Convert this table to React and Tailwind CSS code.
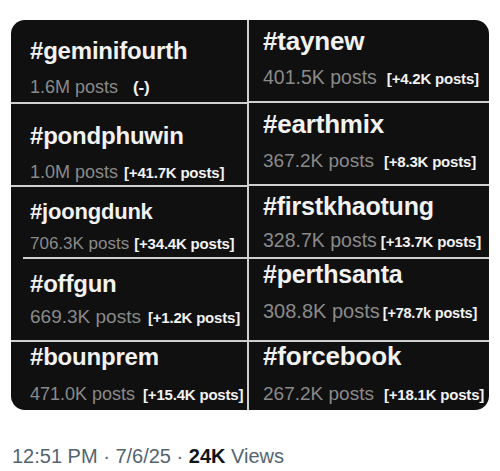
import React from 'react';

// left and right columns of the trend collage (rows don't line up exactly)
const LEFT = [
  { tag: '#geminifourth', h: 'h-[84px] pt-[19px]', tagSize: 'text-[24px]', postsSize: 'text-[18px]', gap: 'mt-[15px]', posts: '1.6M posts', delta: '(-)', deltaGap: 'ml-[15px] text-[17px]', line: 'border-b-2' },
  { tag: '#pondphuwin', h: 'h-[83px] pt-[20px]', tagSize: 'text-[24px]', postsSize: 'text-[18px]', gap: 'mt-[15px]', posts: '1.0M posts', delta: '[+41.7K posts]', deltaGap: 'ml-[6px] text-[15px]', line: 'border-b-2' },
  { tag: '#joongdunk', h: 'h-[72px] pt-[14px]', tagSize: 'text-[22px]', postsSize: 'text-[17px]', gap: 'mt-[12px]', posts: '706.3K posts', delta: '[+34.4K posts]', deltaGap: 'ml-[5px] text-[15px]', line: 'inset' },
  { tag: '#offgun', h: 'h-[83px] pt-[13px]', tagSize: 'text-[24px]', postsSize: 'text-[19px]', gap: 'mt-[11px]', posts: '669.3K posts', delta: '[+1.2K posts]', deltaGap: 'ml-[7px] text-[15px]', line: 'border-b-2' },
  { tag: '#bounprem', h: 'h-[68px] pt-[3px]', tagSize: 'text-[24px]', postsSize: 'text-[18px]', gap: 'mt-[16px]', posts: '471.0K posts', delta: '[+15.4K posts]', deltaGap: 'ml-[8px] text-[15px]', line: '' },
];

const RIGHT = [
  { tag: '#taynew', h: 'h-[83px] pt-[8px]', tagSize: 'text-[26px]', postsSize: 'text-[19.5px]', gap: 'mt-[14px]', posts: '401.5K posts', delta: '[+4.2K posts]', deltaGap: 'ml-[10px] text-[15px]', line: 'border-b-2' },
  { tag: '#earthmix', h: 'h-[83px] pt-[8px]', tagSize: 'text-[26px]', postsSize: 'text-[19px]', gap: 'mt-[14px]', posts: '367.2K posts', delta: '[+8.3K posts]', deltaGap: 'ml-[10px] text-[15px]', line: 'border-b-2' },
  { tag: '#firstkhaotung', h: 'h-[73px] pt-[8px]', tagSize: 'text-[25px]', postsSize: 'text-[19.5px]', gap: 'mt-[12px]', posts: '328.7K posts', delta: '[+13.7K posts]', deltaGap: 'ml-[4px] text-[15px]', line: 'border-b-2' },
  { tag: '#perthsanta', h: 'h-[83px] pt-[3px]', tagSize: 'text-[25px]', postsSize: 'text-[20px]', gap: 'mt-[14px]', posts: '308.8K posts', delta: '[+78.7k posts]', deltaGap: 'ml-[3px] text-[14.5px]', line: 'border-b-2' },
  { tag: '#forcebook', h: 'h-[68px] pt-[1px]', tagSize: 'text-[26px]', postsSize: 'text-[19px]', gap: 'mt-[15px]', posts: '267.2K posts', delta: '[+18.1K posts]', deltaGap: 'ml-[10px] text-[15px]', line: '' },
];

function Cell({ item, pad }) {
  const border = item.line === 'border-b-2' ? 'border-b-2 border-[#cfcfcf]' : '';
  return (
    <div className={`relative box-border ${item.h} ${pad} ${border}`}>
      <div className={`${item.tagSize} font-bold leading-none text-[#f2f2f2] tracking-[-0.2px]`}>
        {item.tag}
      </div>
      <div className={`${item.gap} flex items-baseline leading-none whitespace-nowrap`}>
        <span className={`${item.postsSize} text-[#8a8a8a]`}>{item.posts}</span>
        <span className={`${item.deltaGap} font-bold text-[#f2f2f2] tracking-[-0.2px]`}>
          {item.delta}
        </span>
      </div>
      {item.line === 'inset' && (
        <div className="absolute left-[12px] right-0 bottom-0 h-[2px] bg-[#cfcfcf]" />
      )}
    </div>
  );
}

export default function App() {
  return (
    <div className="w-[500px] h-[471px] bg-white overflow-hidden font-['Liberation_Sans',Arial,sans-serif]">
      {/* Collage card */}
      <div className="ml-[11px] mt-[20px] w-[478px] h-[390px] rounded-[14px] overflow-hidden bg-[#101010] flex">
        <div className="w-[236px] flex flex-col">
          {LEFT.map((item) => (
            <Cell key={item.tag} item={item} pad="pl-[19px]" />
          ))}
        </div>
        <div className="w-[2px] bg-[#cfcfcf]" />
        <div className="w-[240px] flex flex-col">
          {RIGHT.map((item) => (
            <Cell key={item.tag} item={item} pad="pl-[14px]" />
          ))}
        </div>
      </div>

      {/* Timestamp / views */}
      <div className="mt-[36px] pl-[12px] text-[20px] leading-none text-[#536471] whitespace-nowrap">
        12:51 PM · 7/6/25 · <span className="font-bold text-[#0f1419]">24K</span> Views
      </div>
    </div>
  );
}
